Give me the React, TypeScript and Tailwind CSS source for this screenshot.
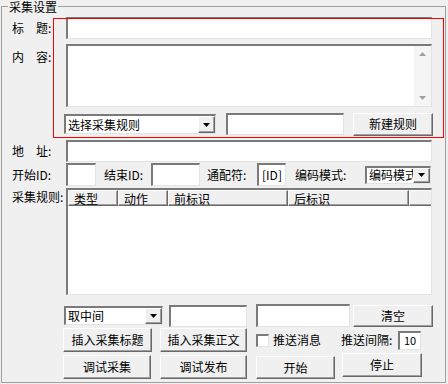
import React from 'react';

const sunken =
  'border-t-2 border-l-2 border-r border-b border-t-[#7a7a7a] border-l-[#7a7a7a] border-r-[#e3e3e3] border-b-[#e3e3e3] bg-white';
const raised =
  'border border-t-white border-l-white border-r-[#696969] border-b-[#696969] shadow-[inset_-1px_-1px_0_#a0a0a0] bg-[#f0f0f0]';

const Label = ({ w, children, className = '' }: { w: string; children: React.ReactNode; className?: string }) => (
  <span className={`shrink-0 whitespace-pre text-[12px] leading-[14px] ${w} ${className}`}>{children}</span>
);

const Field = ({ className, children }: { className: string; children?: React.ReactNode }) => (
  <div className={`shrink-0 ${sunken} ${className}`}>{children}</div>
);

const Btn = ({ className, children }: { className: string; children: React.ReactNode }) => (
  <div className={`shrink-0 flex items-center justify-center text-[12px] ${raised} ${className}`}>{children}</div>
);

const DropArrow = ({ className = '' }: { className?: string }) => (
  <div className={`shrink-0 flex items-center justify-center ${raised} ${className}`}>
    <svg width="7" height="4" viewBox="0 0 7 4">
      <path d="M0 0h7L3.5 4z" fill="#000" />
    </svg>
  </div>
);

const Combo = ({ className, text }: { className: string; text: string }) => (
  <div className={`shrink-0 flex items-center ${sunken} ${className}`}>
    <span className="min-w-0 flex-1 overflow-hidden whitespace-nowrap pl-[2px] text-[12px] leading-[14px]">{text}</span>
    <DropArrow className="w-[17px] h-full" />
  </div>
);

const Head = ({ w, label }: { w: string; label: string }) => (
  <div className={`shrink-0 h-full pl-[5px] text-[12px] leading-[15px] border border-t-white border-l-white border-r-[#696969] border-b-[#696969] shadow-[inset_-1px_-1px_0_#a0a0a0] ${w}`}>
    {label}
  </div>
);

export default function App() {
  return (
    <div className="w-[448px] h-[384px] overflow-hidden bg-[#f0f0f0] pt-[6px] pl-[1px] text-black font-['SimSun','Noto_Sans_CJK_SC',sans-serif]">
      <div className="relative w-[445px] h-[377px] border border-[#a0a0a0]">
        <span className="absolute left-[6px] -top-[7px] bg-[#f0f0f0] px-px text-[12px] leading-[13px]">采集设置</span>
        {/* selection outline */}
        <div className="absolute left-[51px] top-[11px] w-[391px] h-[120px] border border-[#ff0000] pointer-events-none" />

        <div className="pl-[10px]">
          <div className="mt-[10px] flex h-[22px] items-center">
            <Label w="w-[54px]">标　题:</Label>
            <Field className="w-[366px] h-[22px]" />
          </div>

          <div className="mt-[5px] flex h-[63px]">
            <Label w="w-[54px]" className="pt-[6px]">内　容:</Label>
            <Field className="w-[366px] h-[63px] flex justify-end">
              <div className="w-[17px] h-full bg-[#f5f5f5] flex flex-col items-center justify-between py-[6px]">
                <svg width="7" height="4" viewBox="0 0 7 4">
                  <path d="M0 4h7L3.5 0z" fill="#a0a0a0" />
                </svg>
                <svg width="7" height="4" viewBox="0 0 7 4">
                  <path d="M0 0h7L3.5 4z" fill="#a0a0a0" />
                </svg>
              </div>
            </Field>
          </div>

          <div className="mt-[5px] flex h-[24px] items-center">
            <span className="w-[52px] shrink-0" />
            <Combo className="w-[152px] h-[20px]" text="选择采集规则" />
            <Field className="ml-[10px] w-[118px] h-[22px]" />
            <Btn className="ml-[9px] w-[80px] h-[23px]">新建规则</Btn>
          </div>

          <div className="mt-[4px] flex h-[22px] items-center">
            <Label w="w-[54px]">地　址:</Label>
            <Field className="w-[366px] h-[22px]" />
          </div>

          <div className="mt-px flex h-[23px] items-center">
            <Label w="w-[54px]">开始ID:</Label>
            <Field className="w-[30px] h-[23px]" />
            <Label w="w-[47px]" className="ml-[8px]">结束ID:</Label>
            <Field className="w-[49px] h-[23px]" />
            <Label w="w-[50px]" className="ml-[7px]">通配符:</Label>
            <Field className="w-[29px] h-[23px] flex items-center justify-center text-[12px]">[ID]</Field>
            <Label w="w-[70px]" className="ml-[9px]">编码模式:</Label>
            <Combo className="w-[66px] h-[18px]" text="编码模式" />
          </div>

          <div className="mt-[2px] flex h-[107px]">
            <Label w="w-[54px]" className="pt-[2px]">采集规则:</Label>
            <Field className="w-[366px] h-[107px] overflow-hidden">
              <div className="flex h-[16px] bg-[#f0f0f0]">
                <Head w="w-[50px]" label="类型" />
                <Head w="w-[50px]" label="动作" />
                <Head w="w-[120px]" label="前标识" />
                <Head w="w-[121px]" label="后标识" />
                <Head w="w-[24px]" label="" />
              </div>
            </Field>
          </div>

          <div className="mt-[9px] flex h-[23px] items-center">
            <span className="w-[52px] shrink-0" />
            <Combo className="w-[99px] h-[19px]" text="取中间" />
            <Field className="ml-[6px] w-[78px] h-[22px]" />
            <Field className="ml-[9px] w-[94px] h-[23px]" />
            <Btn className="ml-[3px] w-[80px] h-[22px]">清空</Btn>
          </div>

          <div className="mt-px flex h-[24px] items-center">
            <span className="w-[51px] shrink-0" />
            <Btn className="w-[89px] h-[24px]">插入采集标题</Btn>
            <Btn className="ml-[8px] w-[87px] h-[24px]">插入采集正文</Btn>
            <Field className="ml-[9px] w-[13px] h-[13px]" />
            <Label w="w-[48px]" className="ml-[4px]">推送消息</Label>
            <Label w="w-[54px]" className="ml-[20px]">推送间隔:</Label>
            <Field className="ml-[3px] w-[23px] h-[19px] flex items-center justify-center text-[11px]">10</Field>
          </div>

          <div className="mt-px flex h-[26px] items-start">
            <span className="w-[51px] shrink-0" />
            <Btn className="mt-[2px] w-[88px] h-[24px]">调试采集</Btn>
            <Btn className="mt-[2px] ml-[9px] w-[87px] h-[24px]">调试发布</Btn>
            <Btn className="mt-[3px] ml-[9px] w-[79px] h-[23px]">开始</Btn>
            <Btn className="ml-[7px] w-[80px] h-[24px]">停止</Btn>
          </div>
        </div>
      </div>
    </div>
  );
}
